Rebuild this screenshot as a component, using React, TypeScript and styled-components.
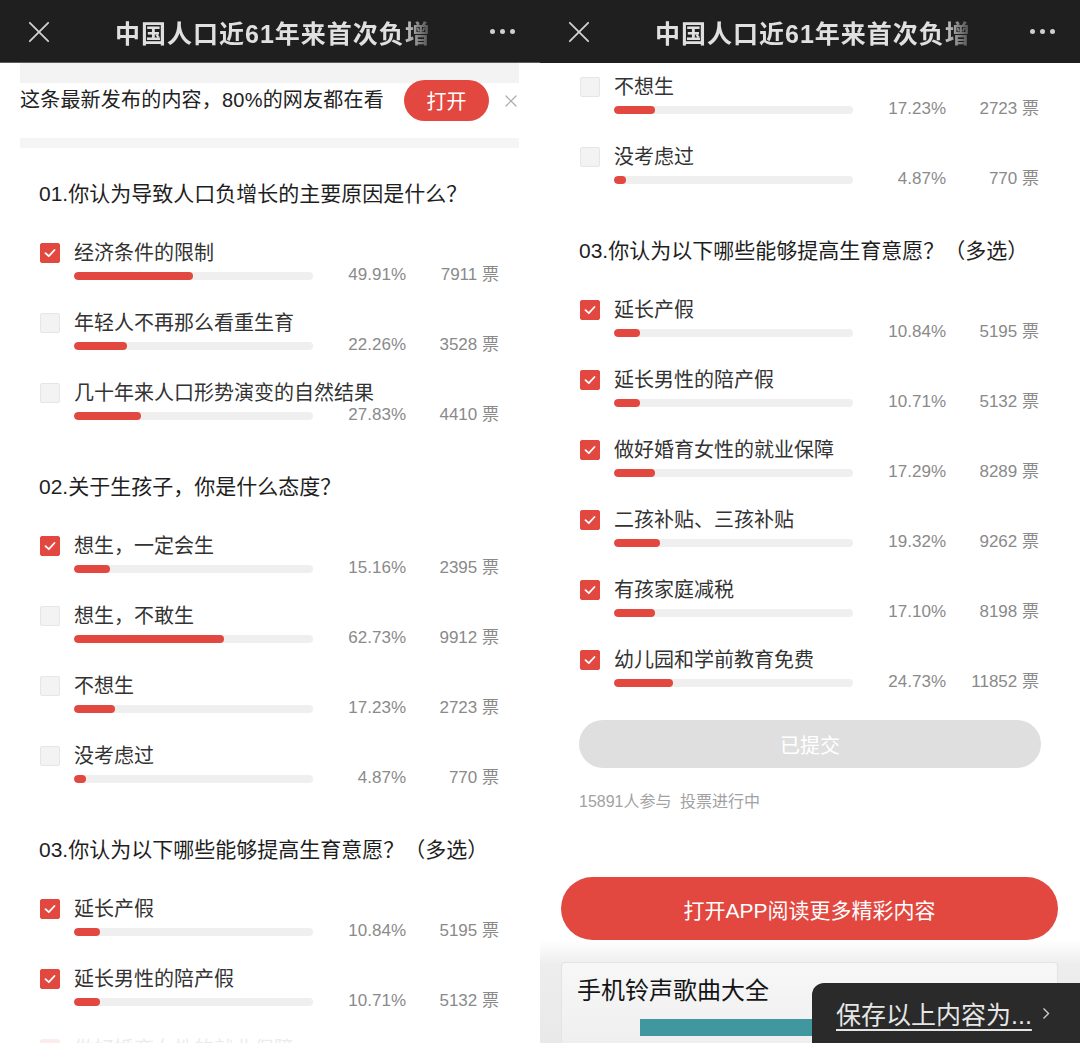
import styled, { createGlobalStyle } from 'styled-components';

const GlobalStyle = createGlobalStyle`
  html, body {
    margin: 0;
    padding: 0;
    background: #fff;
  }
  body {
    font-family: "Liberation Sans", "Noto Sans CJK SC", sans-serif;
    -webkit-font-smoothing: antialiased;
  }
  * { box-sizing: border-box; }
`;

const RED = '#e2483f';

const Page = styled.div`
  width: 1080px;
  height: 1043px;
  display: flex;
  overflow: hidden;
`;

const Phone = styled.div`
  position: relative;
  width: 540px;
  height: 100%;
  display: flex;
  flex-direction: column;
  overflow: hidden;
  background: #fff;
`;

const NavBar = styled.div<{ $line?: boolean }>`
  flex: 0 0 63px;
  display: flex;
  align-items: center;
  padding: 0 25px 0 28px;
  background: #1f1f1f;
  box-shadow: ${p => (p.$line ? 'inset 0 -1px 0 #5c5c5c' : 'none')};
`;

const NavTitle = styled.div`
  margin-left: 65px;
  width: 318px;
  font-size: 25px;
  font-weight: 700;
  letter-spacing: 1px;
  color: #e0e0e0;
  white-space: nowrap;
  overflow: hidden;
  -webkit-mask-image: linear-gradient(to right, #000 90%, rgba(0, 0, 0, 0.15) 100%);
  mask-image: linear-gradient(to right, #000 90%, rgba(0, 0, 0, 0.15) 100%);
`;

const Dots = styled.div`
  margin-left: auto;
  display: flex;
  gap: 5px;

  span {
    width: 5px;
    height: 5px;
    border-radius: 50%;
    background: #cfcfcf;
  }
`;

const Viewport = styled.div<{ $fade?: boolean }>`
  position: relative;
  flex: 1;
  overflow: hidden;

  &::after {
    content: '';
    display: ${p => (p.$fade ? 'block' : 'none')};
    position: absolute;
    left: 0;
    right: 0;
    bottom: 0;
    height: 30px;
    background: linear-gradient(rgba(255, 255, 255, 0), rgba(255, 255, 255, 0.9) 60%);
  }
`;

const Article = styled.div<{ $offset: number }>`
  margin-top: ${p => -p.$offset}px;
`;

const Banner = styled.div`
  height: 87px;
  padding: 17px 23px 0 20px;
  display: flex;
  align-items: flex-start;
  background:
    linear-gradient(#f3f3f3, #f3f3f3) 20px 0 / 499px 20px no-repeat,
    linear-gradient(#f5f5f5, #f5f5f5) 20px 75px / 499px 10px no-repeat;
`;

const BannerText = styled.div`
  height: 41px;
  line-height: 41px;
  font-size: 20px;
  letter-spacing: 0.2px;
  color: #222;
  white-space: nowrap;
`;

const OpenButton = styled.div`
  margin-left: auto;
  width: 85px;
  height: 41px;
  border-radius: 21px;
  background: ${RED};
  color: #fff;
  font-size: 20px;
  display: flex;
  align-items: center;
  justify-content: center;
`;

const BannerClose = styled.div`
  margin-left: 16px;
  height: 41px;
  display: flex;
  align-items: center;
`;

const Question = styled.section`
  padding: 0 39px;
  margin-top: 30px;
  display: flex;
  flex-direction: column;

  & + & {
    margin-top: 46px;
  }
`;

const QuestionTitle = styled.h2`
  margin: 0 0 33px;
  font-size: 21px;
  line-height: 28px;
  font-weight: 400;
  color: #1e1e1e;
  white-space: nowrap;
`;

const OptionList = styled.div`
  display: flex;
  flex-direction: column;
  gap: 24px;
`;

const Option = styled.div`
  display: grid;
  grid-template-columns: 35px 239px 93px 93px;
  grid-template-rows: 24px 22px;
  align-items: center;
`;

const Checkbox = styled.div<{ $checked: boolean }>`
  grid-column: 1;
  grid-row: 1;
  margin-left: 1px;
  width: 20px;
  height: 20px;
  border-radius: 2px;
  background: ${p => (p.$checked ? RED : '#f3f3f3')};
  border: 1px solid ${p => (p.$checked ? RED : '#e6e6e6')};
  display: flex;
  align-items: center;
  justify-content: center;
`;

const Label = styled.div`
  grid-column: 2 / 5;
  grid-row: 1;
  font-size: 20px;
  line-height: 24px;
  color: #333;
  white-space: nowrap;
`;

const Track = styled.div`
  grid-column: 2;
  grid-row: 2;
  height: 8px;
  border-radius: 4px;
  background: #efefef;
  overflow: hidden;
`;

const Fill = styled.div`
  height: 100%;
  border-radius: 4px;
  background: ${RED};
`;

const Stat = styled.div<{ $col: number }>`
  grid-column: ${p => p.$col};
  grid-row: 2;
  align-self: start;
  text-align: right;
  font-size: 17px;
  line-height: 20px;
  color: #8a8a8a;
  white-space: nowrap;
`;

const SubmitButton = styled.div`
  margin-top: 26px;
  height: 48px;
  border-radius: 24px;
  background: #dfdfdf;
  color: #fff;
  font-size: 20px;
  display: flex;
  align-items: center;
  justify-content: center;
`;

const VoteMeta = styled.div`
  margin-top: 23px;
  font-size: 16px;
  line-height: 22px;
  color: #a2a2a2;
  word-spacing: 4px;
`;

const AppButton = styled.div`
  margin: 64px 22px 0 21px;
  height: 63px;
  border-radius: 32px;
  background: ${RED};
  color: #fff;
  font-size: 21px;
  display: flex;
  align-items: center;
  justify-content: center;
`;

const Recommend = styled.div`
  padding: 22px 22px 40px 21px;
  background: linear-gradient(#ffffff, #ededed 25px, #e6e6e6);
`;

const Card = styled.div`
  padding: 16px 15px 20px;
  border: 1px solid #e3e3e3;
  border-radius: 4px;
  background: linear-gradient(#f7f7f7, #eeeeee);
`;

const CardTitle = styled.div`
  font-size: 24px;
  line-height: 24px;
  color: #141414;
`;

const CardBar = styled.div`
  margin: 16px 0 0 63px;
  width: 360px;
  height: 17px;
  background: #40979f;
`;

const SaveToast = styled.div`
  position: absolute;
  right: 0;
  bottom: 0;
  width: 268px;
  height: 60px;
  padding-left: 24px;
  display: flex;
  align-items: center;
  gap: 10px;
  border-top-left-radius: 12px;
  background: #2a2a2a;
`;

const SaveText = styled.span`
  font-size: 25px;
  color: #e6e6e6;
  text-decoration: underline;
  text-underline-offset: 5px;
  text-decoration-thickness: 2px;
  white-space: nowrap;
`;

type Opt = { label: string; pct: string; votes: string; checked?: boolean };
type Q = { title: string; options: Opt[] };

const questions: Q[] = [
  {
    title: '01.你认为导致人口负增长的主要原因是什么？',
    options: [
      { label: '经济条件的限制', pct: '49.91', votes: '7911', checked: true },
      { label: '年轻人不再那么看重生育', pct: '22.26', votes: '3528' },
      { label: '几十年来人口形势演变的自然结果', pct: '27.83', votes: '4410' },
    ],
  },
  {
    title: '02.关于生孩子，你是什么态度？',
    options: [
      { label: '想生，一定会生', pct: '15.16', votes: '2395', checked: true },
      { label: '想生，不敢生', pct: '62.73', votes: '9912' },
      { label: '不想生', pct: '17.23', votes: '2723' },
      { label: '没考虑过', pct: '4.87', votes: '770' },
    ],
  },
  {
    title: '03.你认为以下哪些能够提高生育意愿？（多选）',
    options: [
      { label: '延长产假', pct: '10.84', votes: '5195', checked: true },
      { label: '延长男性的陪产假', pct: '10.71', votes: '5132', checked: true },
      { label: '做好婚育女性的就业保障', pct: '17.29', votes: '8289', checked: true },
      { label: '二孩补贴、三孩补贴', pct: '19.32', votes: '9262', checked: true },
      { label: '有孩家庭减税', pct: '17.10', votes: '8198', checked: true },
      { label: '幼儿园和学前教育免费', pct: '24.73', votes: '11852', checked: true },
    ],
  },
];

function CloseIcon({ size, color, width }: { size: number; color: string; width: number }) {
  return (
    <svg width={size} height={size} viewBox="0 0 24 24">
      <path d="M2 2 L22 22 M22 2 L2 22" stroke={color} strokeWidth={width} strokeLinecap="round" fill="none" />
    </svg>
  );
}

function Check() {
  return (
    <svg width="14" height="14" viewBox="0 0 14 14">
      <path d="M2.5 7.2 L5.8 10.2 L11.5 4" stroke="#fff" strokeWidth="1.8" fill="none" strokeLinecap="round" strokeLinejoin="round" />
    </svg>
  );
}

function Nav({ line }: { line?: boolean }) {
  return (
    <NavBar $line={line}>
      <CloseIcon size={22} color="#d0d0d0" width={2} />
      <NavTitle>中国人口近61年来首次负增</NavTitle>
      <Dots>
        <span />
        <span />
        <span />
      </Dots>
    </NavBar>
  );
}

function PollOption({ opt }: { opt: Opt }) {
  return (
    <Option>
      <Checkbox $checked={!!opt.checked}>{opt.checked && <Check />}</Checkbox>
      <Label>{opt.label}</Label>
      <Track>
        <Fill style={{ width: `${opt.pct}%` }} />
      </Track>
      <Stat $col={3}>{opt.pct}%</Stat>
      <Stat $col={4}>{opt.votes} 票</Stat>
    </Option>
  );
}

function ArticleBody({ offset }: { offset: number }) {
  return (
    <Article $offset={offset}>
      <Banner>
        <BannerText>这条最新发布的内容，80%的网友都在看</BannerText>
        <OpenButton>打开</OpenButton>
        <BannerClose>
          <CloseIcon size={12} color="#a8a8a8" width={2.4} />
        </BannerClose>
      </Banner>

      {questions.map((q, i) => (
        <Question key={q.title}>
          <QuestionTitle>{q.title}</QuestionTitle>
          <OptionList>
            {q.options.map(o => (
              <PollOption key={o.label} opt={o} />
            ))}
          </OptionList>
          {i === questions.length - 1 && (
            <>
              <SubmitButton>已提交</SubmitButton>
              <VoteMeta>15891人参与 投票进行中</VoteMeta>
            </>
          )}
        </Question>
      ))}

      <AppButton>打开APP阅读更多精彩内容</AppButton>

      <Recommend>
        <Card>
          <CardTitle>手机铃声歌曲大全</CardTitle>
          <CardBar />
        </Card>
      </Recommend>
    </Article>
  );
}

export default function App() {
  return (
    <>
      <GlobalStyle />
      <Page>
        <Phone>
          <Nav line />
          <Viewport $fade>
            <ArticleBody offset={0} />
          </Viewport>
        </Phone>
        <Phone>
          <Nav />
          <Viewport>
            <ArticleBody offset={599} />
          </Viewport>
          <SaveToast>
            <SaveText>保存以上内容为...</SaveText>
            <svg width="8" height="13" viewBox="0 0 8 13">
              <path d="M1.5 1.5 L6.5 6.5 L1.5 11.5" stroke="#cfcfcf" strokeWidth="1.4" fill="none" />
            </svg>
          </SaveToast>
        </Phone>
      </Page>
    </>
  );
}
